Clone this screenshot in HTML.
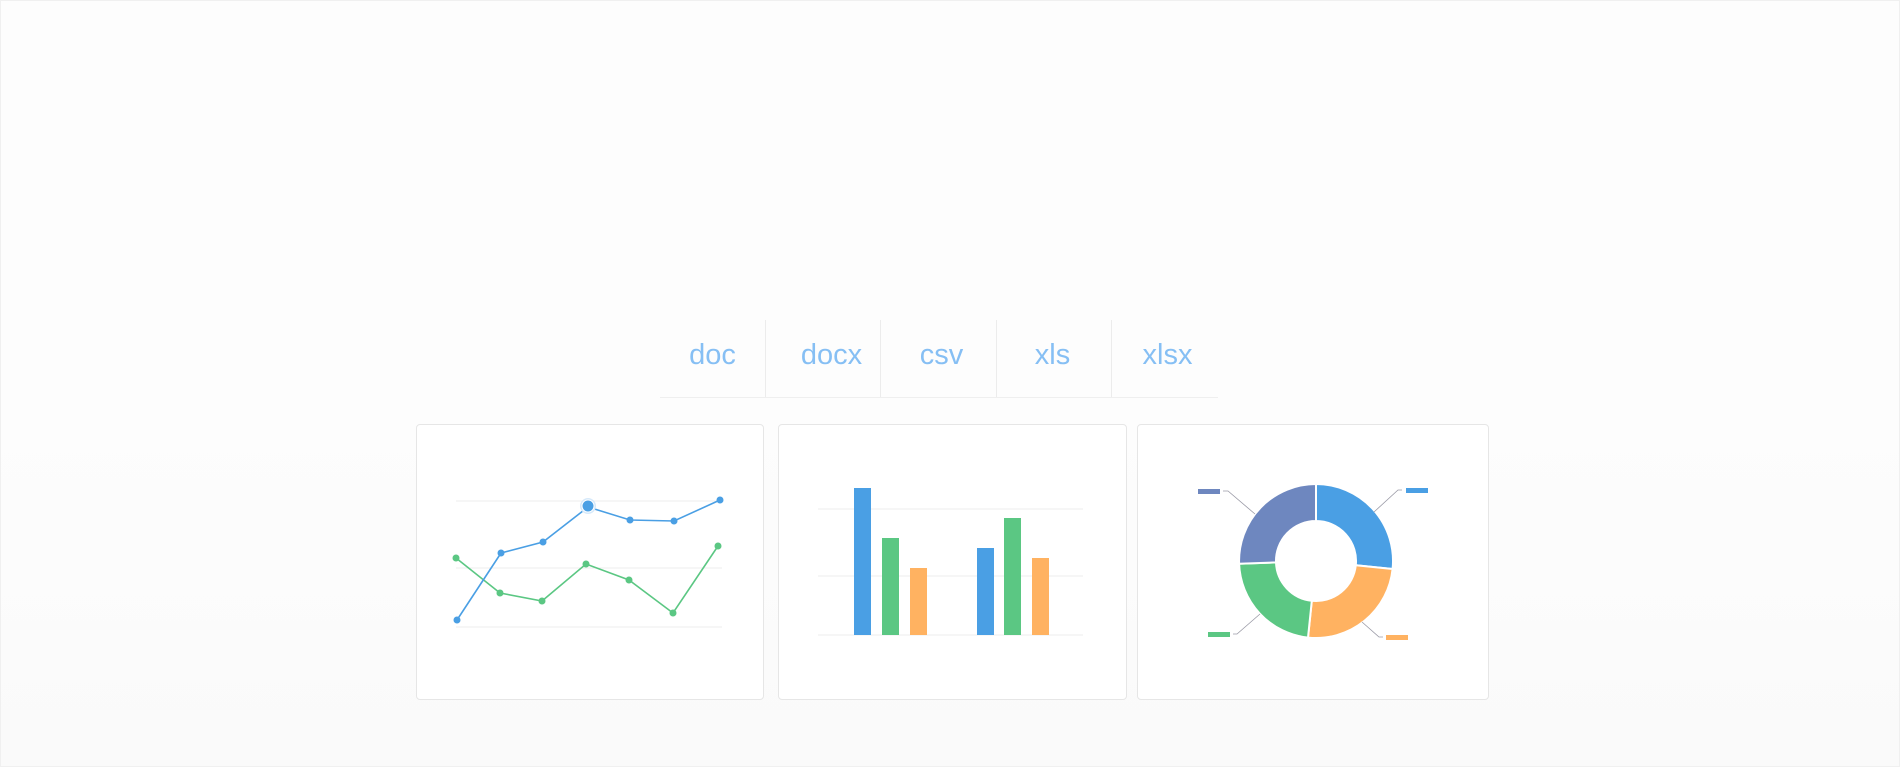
<!DOCTYPE html>
<html><head><meta charset="utf-8"><style>
html,body{margin:0;padding:0;}
body{width:1900px;height:767px;overflow:hidden;position:relative;background:linear-gradient(#fdfdfd,#fdfdfd 55%,#fafafa);font-family:"Liberation Sans",sans-serif;}
.frame{position:absolute;left:0;top:0;width:1898px;height:765px;border:1px solid #f0f0f0;}
.tab{position:absolute;top:320px;height:77px;width:115px;text-align:center;line-height:70px;font-size:29px;color:#86bff4;font-weight:300;letter-spacing:0px;}
.div{position:absolute;top:320px;width:1px;height:77px;background:#ececec;}
.line{position:absolute;left:660px;width:558px;top:397px;height:1px;background:#efefef;}
.card{position:absolute;top:424px;height:274px;background:#fff;border:1px solid #e6e6e6;border-radius:4px;}
svg{position:absolute;left:0;top:0;}
</style></head><body>
<div class="frame"></div>
<div class="tab" style="left:655px">doc</div>
<div class="tab" style="left:774px">docx</div>
<div class="tab" style="left:884px">csv</div>
<div class="tab" style="left:995px">xls</div>
<div class="tab" style="left:1110px">xlsx</div>
<div class="div" style="left:765px"></div>
<div class="div" style="left:880px"></div>
<div class="div" style="left:996px"></div>
<div class="div" style="left:1111px"></div>
<div class="line"></div>
<div class="card" style="left:416px;width:346px"></div>
<div class="card" style="left:778px;width:347px"></div>
<div class="card" style="left:1137px;width:350px"></div>
<svg width="1900" height="767" viewBox="0 0 1900 767">
<g stroke="#ededed" stroke-width="1">
<line x1="456" y1="501" x2="722" y2="501"/><line x1="456" y1="568" x2="722" y2="568"/><line x1="456" y1="627" x2="722" y2="627"/>
<line x1="818" y1="509" x2="1083" y2="509"/><line x1="818" y1="576" x2="1083" y2="576"/><line x1="818" y1="635" x2="1083" y2="635"/>
</g>
<polyline fill="none" stroke="#5bc783" stroke-width="1.6" points="456,558 500,593 542,601 586,564 629,580 673,613 718,546"/>
<polyline fill="none" stroke="#4a9fe4" stroke-width="1.6" points="457,620 501,553 543,542 588,507 630,520 674,521 720,500"/>
<g fill="#5bc783"><circle cx="456" cy="558" r="3.5"/><circle cx="500" cy="593" r="3.5"/><circle cx="542" cy="601" r="3.5"/><circle cx="586" cy="564" r="3.5"/><circle cx="629" cy="580" r="3.5"/><circle cx="673" cy="613" r="3.5"/><circle cx="718" cy="546" r="3.5"/></g>
<g fill="#4a9fe4"><circle cx="457" cy="620" r="3.5"/><circle cx="501" cy="553" r="3.5"/><circle cx="543" cy="542" r="3.5"/><circle cx="630" cy="520" r="3.5"/><circle cx="674" cy="521" r="3.5"/><circle cx="720" cy="500" r="3.5"/></g>
<circle cx="588" cy="506" r="8" fill="#d6e9fa"/><circle cx="588" cy="506" r="6.5" fill="#fff"/><circle cx="588" cy="506" r="5.5" fill="#4a9fe4"/>
<rect x="854" y="488" width="17" height="147" fill="#4a9fe4"/>
<rect x="882" y="538" width="17" height="97" fill="#5bc783"/>
<rect x="910" y="568" width="17" height="67" fill="#ffb261"/>
<rect x="977" y="548" width="17" height="87" fill="#4a9fe4"/>
<rect x="1004" y="518" width="17" height="117" fill="#5bc783"/>
<rect x="1032" y="558" width="17" height="77" fill="#ffb261"/>
<g stroke="#fff" stroke-width="2">
<path d="M1316,484 A77,77 0 0 1 1392.6,569 L1355.8,565.2 A40,40 0 0 0 1316,521 Z" fill="#4a9fe4"/>
<path d="M1392.6,569 A77,77 0 0 1 1308,637.6 L1311.8,600.8 A40,40 0 0 0 1355.8,565.2 Z" fill="#ffb261"/>
<path d="M1308,637.6 A77,77 0 0 1 1239.1,563.7 L1276,562.4 A40,40 0 0 0 1311.8,600.8 Z" fill="#5bc783"/>
<path d="M1239.1,563.7 A77,77 0 0 1 1316,484 L1316,521 A40,40 0 0 0 1276,562.4 Z" fill="#6e87bf"/>
</g>
<g fill="none" stroke="#9a9aa6" stroke-width="0.8">
<polyline points="1223,491 1228,491 1255,514"/>
<polyline points="1374,512 1398,490 1402,490"/>
<polyline points="1362,622 1379,637 1383,637"/>
<polyline points="1260,614 1237,634 1233,634"/>
</g>
<rect x="1198" y="489" width="22" height="5" fill="#6e87bf"/>
<rect x="1406" y="488" width="22" height="5" fill="#4a9fe4"/>
<rect x="1386" y="635" width="22" height="5" fill="#ffb261"/>
<rect x="1208" y="632" width="22" height="5" fill="#5bc783"/>
</svg>
</body></html>
